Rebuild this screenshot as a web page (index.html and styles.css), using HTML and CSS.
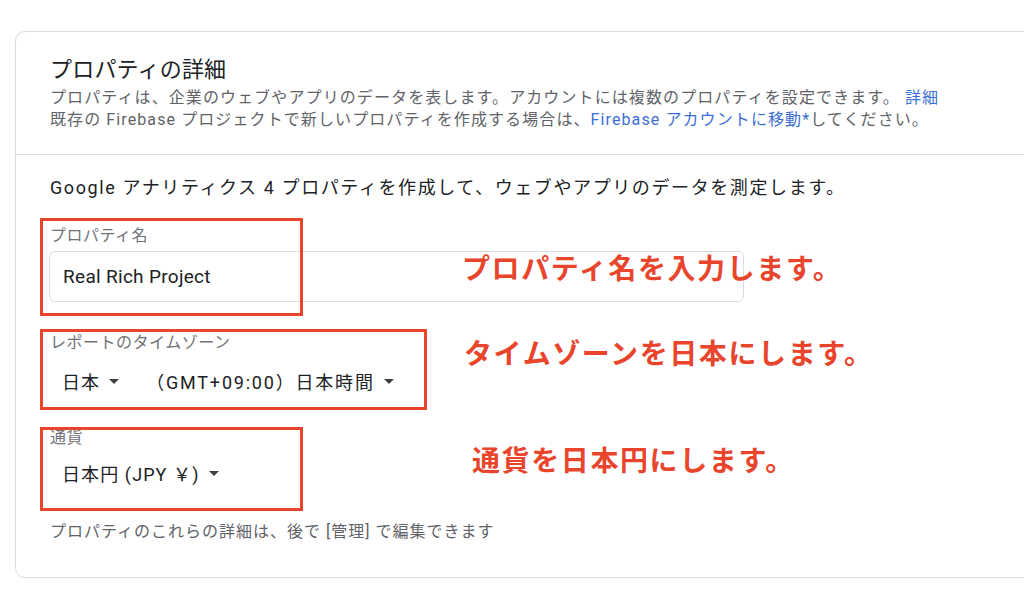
FILE: index.html
```html
<!DOCTYPE html>
<html lang="ja">
<head>
    <meta charset="UTF-8">
    <meta name="viewport" content="width=device-width, initial-scale=1.0">
    <title>プロパティの詳細</title>
    <link rel="stylesheet" href="styles.css">
</head>
<body>
    <div class="card">
        <div class="card-head">
            <h2 class="title">プロパティの詳細</h2>
            <p class="desc">プロパティは、企業のウェブやアプリのデータを表します。アカウントには複数のプロパティを設定できます。 <a href="#">詳細</a></p>
            <p class="desc">既存の Firebase プロジェクトで新しいプロパティを作成する場合は、<a href="#">Firebase アカウントに移動*</a>してください。</p>
        </div>
        <div class="card-body">
            <p class="intro">Google アナリティクス 4 プロパティを作成して、ウェブやアプリのデータを測定します。</p>

            <div class="field field-name">
                <label class="label">プロパティ名</label>
                <div class="input">Real Rich Project</div>
            </div>

            <div class="field field-tz">
                <label class="label">レポートのタイムゾーン</label>
                <div class="selects">
                    <span class="select sel-country">日本<i class="caret"></i></span>
                    <span class="select sel-zone">（GMT+09:00）日本時間<i class="caret"></i></span>
                </div>
            </div>

            <div class="field field-cur">
                <label class="label">通貨</label>
                <div class="selects">
                    <span class="select">日本円 (JPY ￥)<i class="caret"></i></span>
                </div>
            </div>

            <p class="foot">プロパティのこれらの詳細は、後で [管理] で編集できます</p>
        </div>
    </div>

    <!-- 注釈 -->
    <div class="mark mark1"></div>
    <div class="mark mark2"></div>
    <div class="mark mark3"></div>
    <p class="note note1">プロパティ名を入力します。</p>
    <p class="note note2">タイムゾーンを日本にします。</p>
    <p class="note note3">通貨を日本円にします。</p>
</body>
</html>
```

FILE: styles.css
```css
*{margin: 0px;padding: 0px;box-sizing: border-box;}
html,body{
    width: 1024px;
    height: 598px;
    overflow: hidden;
    background: #fff;
}
body{
    position: relative;
    font-family: Roboto, "Noto Sans CJK JP", sans-serif;
    color: #202124;
}
.card{
    margin: 31px 0px 0px 15px;
    width: 1080px;
    border: 1px solid #dadce0;
    border-radius: 10px;
}
.card-head{
    padding: 23px 34px 23px;
    border-bottom: 1px solid #dadce0;
}
.title{
    font-size: 22px;
    font-weight: 400;
    line-height: 30px;
    letter-spacing: 0.2px;
    margin-bottom: 2px;
}
.desc{
    font-size: 16px;
    line-height: 22px;
    color: #5f6368;
    letter-spacing: 1.1px;
}
.desc a{
    color: #3b6fd6;
    text-decoration: none;
}
.card-body{
    padding: 20px 34px 34px;
}
.intro{
    font-size: 18px;
    line-height: 26px;
    letter-spacing: 1.6px;
}
.label{
    display: block;
    font-size: 16px;
    line-height: 22px;
    color: #6f7378;
    letter-spacing: 0.5px;
}
.field-name{margin-top: 24px;}
.input{
    width: 695px;
    height: 51px;
    margin: 4px 0px 0px -1px;
    border: 1px solid #dadce0;
    border-radius: 6px;
    padding: 0px 13px;
    display: flex;
    align-items: center;
    font-size: 19px;
    letter-spacing: 0.3px;
}
.field-tz{margin-top: 30px;}
.field-cur{margin-top: 28px;}
.selects{
    display: flex;
    align-items: center;
    height: 36px;
    padding-left: 12px;
    margin-top: 9px;
}
.field-cur .selects{margin-top: 6px;}
.select{
    display: flex;
    align-items: center;
    font-size: 18px;
    letter-spacing: 1.1px;
}
.sel-zone{
    margin-left: 27px;
    letter-spacing: 1.8px;
}
.caret{
    width: 0px;
    height: 0px;
    margin-left: 9px;
    border-left: 5px solid transparent;
    border-right: 5px solid transparent;
    border-top: 5px solid #3c4043;
}
.foot{
    margin-top: 30px;
    font-size: 16px;
    line-height: 22px;
    color: #5f6368;
    letter-spacing: 1px;
}
.mark{
    position: absolute;
    border: 3px solid #e8452c;
}
.mark1{left: 40px;top: 218px;width: 263px;height: 98px;}
.mark2{left: 40px;top: 329px;width: 387px;height: 81px;}
.mark3{left: 40px;top: 427px;width: 263px;height: 84px;}
.note{
    position: absolute;
    font-size: 28px;
    line-height: 36px;
    font-weight: 700;
    letter-spacing: 1.6px;
    color: #e8452c;
}
.note1{left: 462px;top: 252px;}
.note2{left: 464px;top: 337px;}
.note3{left: 472px;top: 444px;}
```
